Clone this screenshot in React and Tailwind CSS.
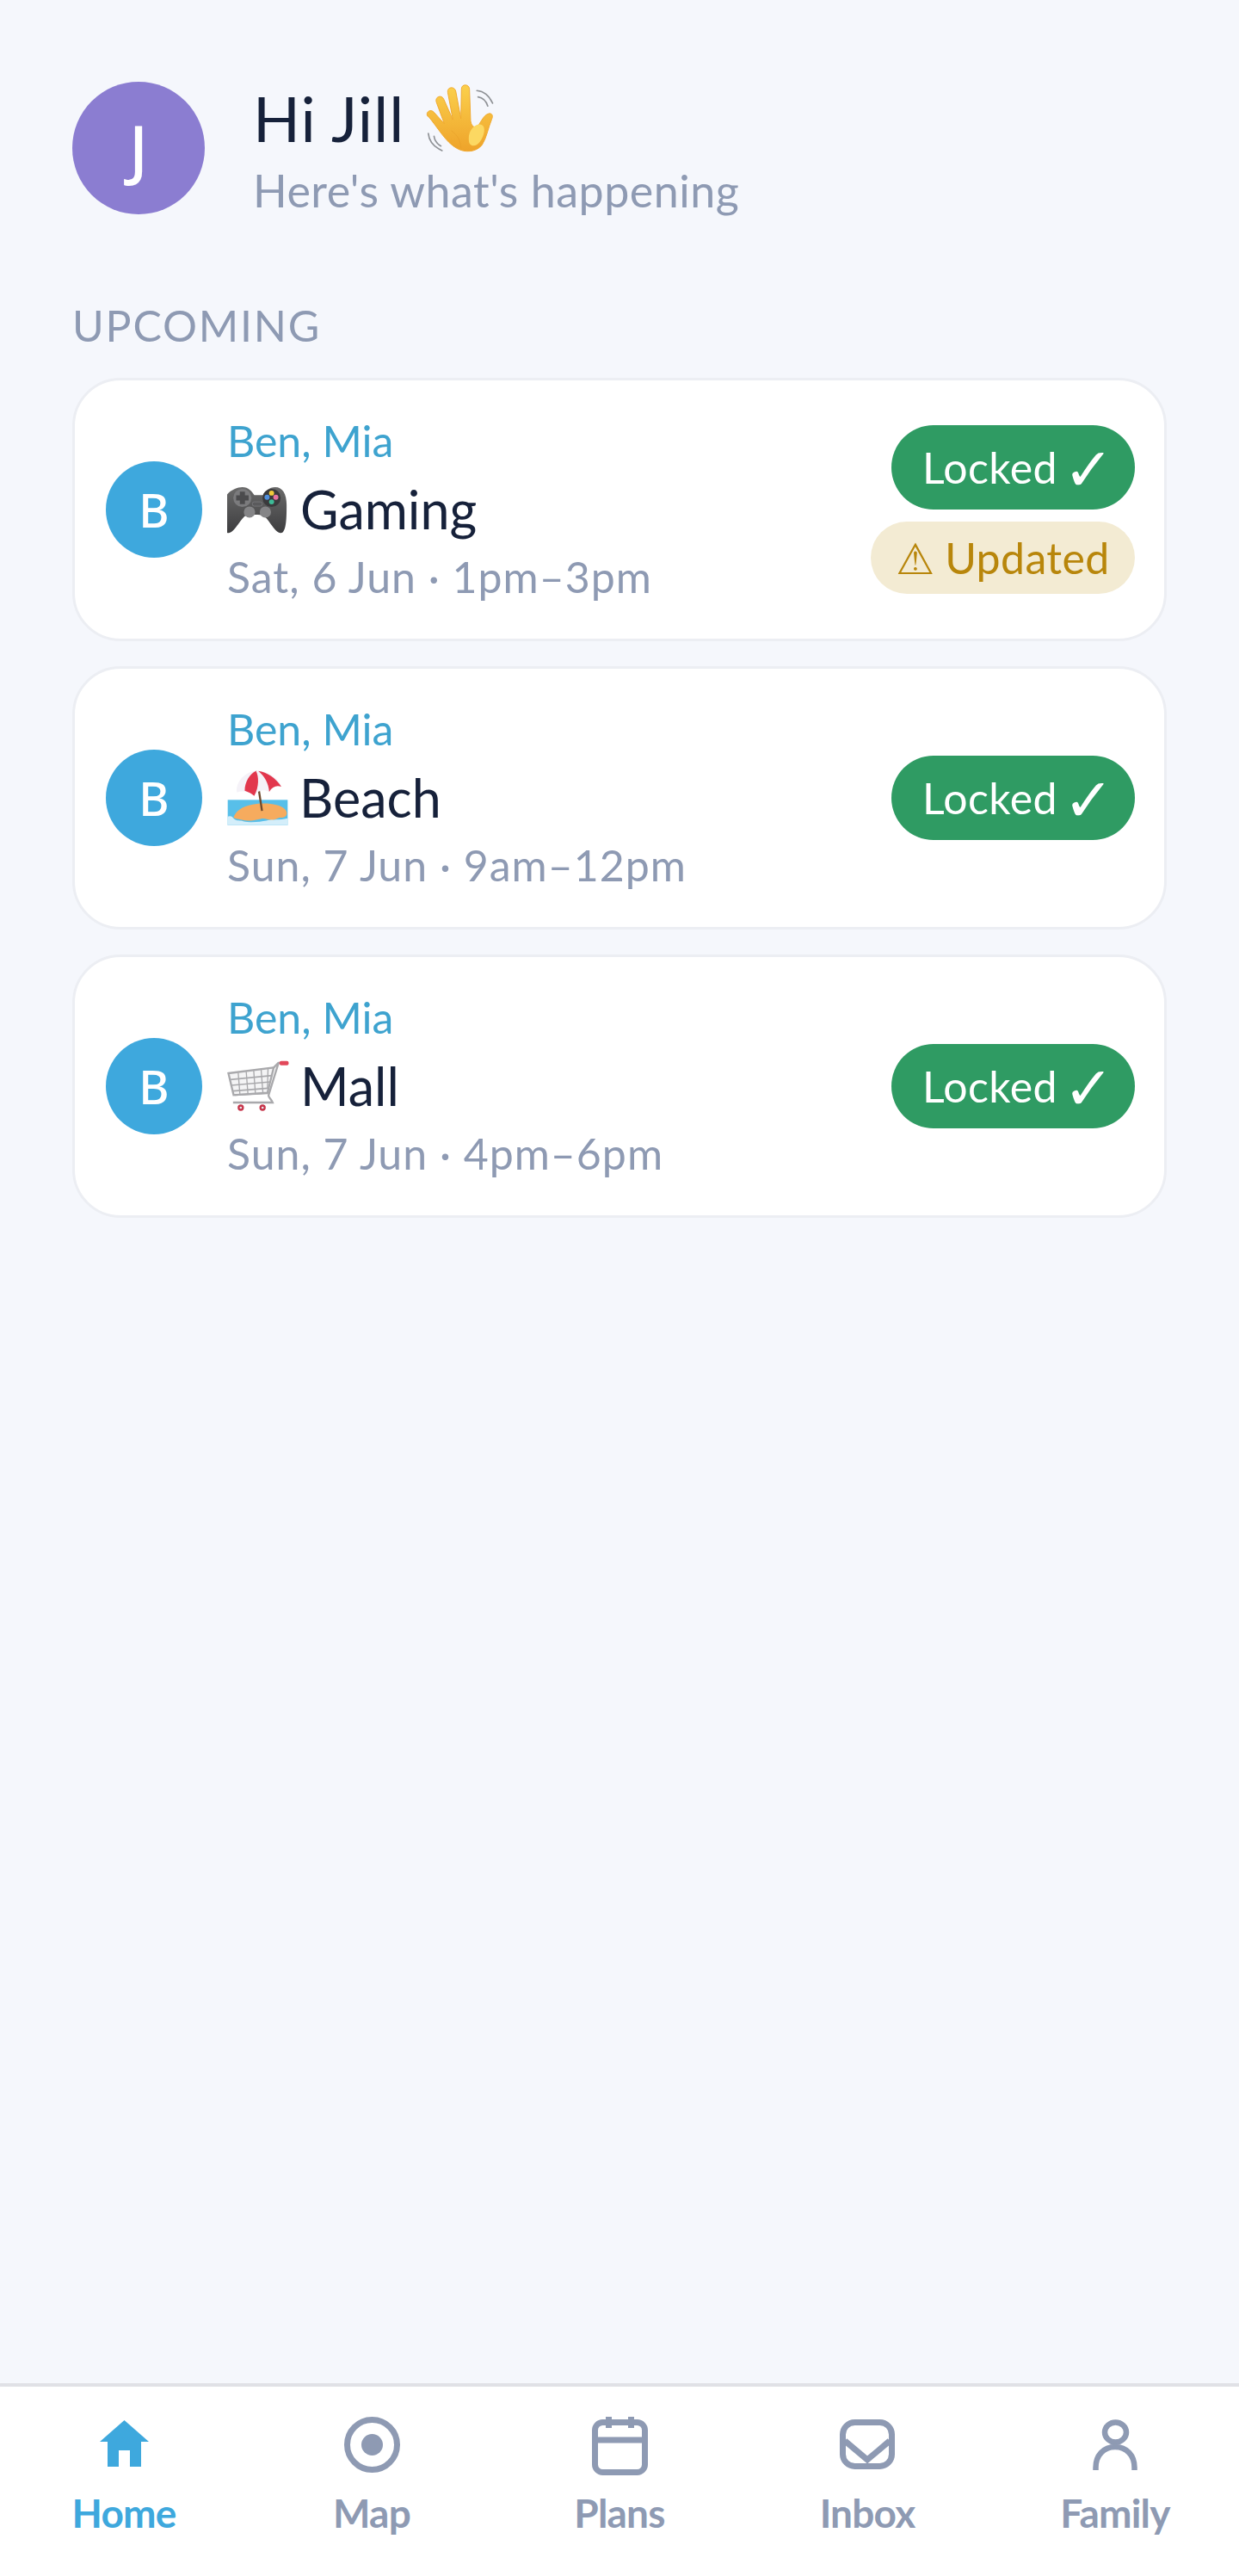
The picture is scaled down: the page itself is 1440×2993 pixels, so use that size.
import React from "react";

const Wave = () => (
  <svg width="85" height="83" viewBox="40 50 255 250" className="shrink-0">
    <defs>
      <linearGradient id="hand" x1="0" y1="0" x2="0" y2="1">
        <stop offset="0" stopColor="#fbd04c" />
        <stop offset="1" stopColor="#eea32a" />
      </linearGradient>
    </defs>
    <g fill="none" stroke="#8f9296" strokeWidth="5" strokeLinecap="round">
      <path d="M218 78c22 2 42 16 55 44" />
      <path d="M222 100c14 2 28 14 34 32" />
      <path d="M48 228c2 24 18 46 48 60" />
      <path d="M68 238c2 14 10 26 24 34" />
    </g>
    <path
      d="M46 168c-10-14 10-28 22-14l36 40-28-76c-6-18 18-28 26-10l32 72-18-96c-3-20 24-22 28-4l18 96 2-104c0-18 26-18 28 0l4 112c2 12 8 26 22 20 10-4 22-44 44-46 12 0 12 12 8 20-12 28-18 66-34 90-20 26-62 28-88 12-40-22-66-72-100-112z"
      fill="url(#hand)"
      stroke="#f0a92f"
      strokeWidth="3"
    />
    <path d="M190 236c4-26 28-46 46-38 14 8 8 38-8 60-12 16-30 16-36 4-3-6-3-16-2-26z" fill="#fcd862" />
    <path d="M128 218c20 14 34 34 34 62" fill="none" stroke="#e59a27" strokeWidth="3" opacity=".45" />
  </svg>
);

const Gamepad = () => (
  <svg width="72" height="56" viewBox="70 10 215 170" className="shrink-0">
    <defs>
      <linearGradient id="pad" x1="0" y1="0" x2="0" y2="1">
        <stop offset="0" stopColor="#6a6a6a" />
        <stop offset="1" stopColor="#3d3d3f" />
      </linearGradient>
    </defs>
    <path
      d="M122 16c22 0 32 14 42 28h30c10-14 22-28 44-28 26 0 40 24 40 62 0 40 0 98-20 100-20 2-42-48-60-60-12-6-52-6-66 0-18 12-40 62-60 60-22-2-18-60-18-100 0-38 40-62 68-62z"
      fill="url(#pad)"
    />
    <circle cx="122" cy="54" r="32" fill="#7b7b7d" />
    <path d="M113 32h18v13h13v18h-13v13h-18V63h-13V45h13z" fill="#4b4b4d" />
    <circle cx="225" cy="54" r="32" fill="#3a3a3c" />
    <circle cx="225" cy="37" r="9" fill="#f2cb3a" />
    <circle cx="240" cy="52" r="9" fill="#e873a0" />
    <circle cx="225" cy="68" r="9" fill="#3dbb97" />
    <circle cx="209" cy="52" r="9" fill="#4f8fdc" />
    <rect x="157" y="68" width="35" height="15" rx="7" fill="#5a5a5c" stroke="#848486" strokeWidth="2" />
    <circle cx="147" cy="104" r="20" fill="#858587" />
    <circle cx="203" cy="104" r="20" fill="#858587" />
  </svg>
);

const Beach = () => (
  <svg width="71" height="64" viewBox="70 18 212 190" className="shrink-0">
    <rect x="72" y="120" width="208" height="88" fill="#58bfe9" />
    <path d="M92 182c6-22 30-40 66-46 44-8 94-2 112 16 14 14 6 30-14 30-14 0-20 10-34 8-14-2-22-8-36-4-24 6-44 8-62 4-14-4-24-2-32-8z" fill="#f6ab5e" />
    <path d="M72 178c10-4 16 0 22 8 8 8 22 4 32 8 24 6 60 2 80-2 24-6 44 0 74-8v24H72z" fill="#d4eefa" />
    <path d="M170 20l21 138" stroke="#6f4a2c" strokeWidth="7" fill="none" />
    <path d="M104 94c-6-34 28-72 66-74 40-2 78 24 88 54-16-6-32 0-42 18-18-10-40-6-52 14-16-14-40-20-60-12z" fill="#f5f2f8" />
    <path d="M131 88c0-30 18-58 39-68 10 18 12 54-6 86-8-8-20-14-33-18z" fill="#e2374d" />
    <path d="M178 20c30 4 60 24 80 54-16-6-32 0-42 18-2-28-16-54-38-72z" fill="#e2374d" />
  </svg>
);

const Cart = () => (
  <svg width="72" height="60" viewBox="70 25 215 180" className="shrink-0">
    <g fill="none" stroke="#a9a9ac">
      <path d="M74 70l158-20-22 88-118 8z" strokeWidth="7" fill="#f4f4f5" />
      <path d="M80 92l146-14M84 112l136-12M90 132l122-10" strokeWidth="5" />
      <path d="M108 68l6 76M136 64l6 78M162 60l6 80M188 58l6 78M212 54l-2 70" strokeWidth="4" />
      <path d="M232 50l16-16h14" strokeWidth="7" />
      <path d="M248 36l-34 110c-2 8 8 12 14 26H90" strokeWidth="7" />
      <path d="M96 146l116-6" strokeWidth="6" />
    </g>
    <rect x="252" y="27" width="32" height="15" rx="6" fill="#e2485a" />
    <circle cx="117" cy="190" r="11" fill="#c6344a" />
    <circle cx="193" cy="190" r="11" fill="#c6344a" />
    <circle cx="117" cy="190" r="4" fill="#e7e7e9" />
    <circle cx="193" cy="190" r="4" fill="#e7e7e9" />
  </svg>
);

const HomeIcon = () => (
  <svg width="57" height="54" viewBox="0 0 57 54" className="mt-[4px]">
    <path d="M28.500 0L57 25H48V54H35V35H22V54H9V25H0z" fill="#3ea8dd" />
  </svg>
);

const MapIcon = () => (
  <svg width="65" height="65" viewBox="0 0 65 65">
    <circle cx="32.500" cy="32.500" r="29" fill="none" stroke="#8e9ab3" strokeWidth="7" />
    <circle cx="32.500" cy="32.500" r="12.500" fill="#8e9ab3" />
  </svg>
);

const PlansIcon = () => (
  <svg width="65" height="68" viewBox="0 0 65 68" fill="none" stroke="#8e9ab3" strokeWidth="7">
    <rect x="3.500" y="6.500" width="58" height="58" rx="9" />
    <path d="M3.500 27h58" />
    <path d="M19.500 0v13M45.500 0v13" />
  </svg>
);

const InboxIcon = () => (
  <svg width="64" height="58" viewBox="0 0 64 58" fill="none" stroke="#8e9ab3" strokeWidth="7" className="mt-[3px]">
    <rect x="3.500" y="3.500" width="57" height="51" rx="14" />
    <path d="M6 25l26 22 26-22" />
  </svg>
);

const FamilyIcon = () => (
  <svg width="52" height="59" viewBox="0 0 52 59" fill="none" stroke="#8e9ab3" strokeWidth="6.500" className="mt-[3px]">
    <ellipse cx="26.500" cy="15" rx="12.500" ry="11.500" />
    <path d="M3.500 59v-3c0-14 9-24 22.500-24s22.500 10 22.500 24v3" />
  </svg>
);

const Locked = () => (
  <div className="flex h-[98px] w-[283px] items-center gap-[7px] rounded-full bg-[#2f9b63] pl-[36px] text-[50px] tracking-[0.4px] text-white">
    <span>Locked</span>
    <span className="text-[70px] font-bold leading-none">✓</span>
  </div>
);

const Updated = () => (
  <div className="flex h-[84px] w-[307px] items-center justify-center gap-[12px] rounded-full bg-[#f3ebd3] text-[50px] text-[#b8860b]">
    <span>⚠</span>
    <span className="tracking-[0.4px]">Updated</span>
  </div>
);

const Card = ({ icon, title, date, updated }) => (
  <div className="flex h-[306px] items-center rounded-[56px] border-[3px] border-[#eceef3] bg-white pl-[36px] pr-[34px]">
    <div className="flex h-[112px] w-[112px] shrink-0 items-center justify-center rounded-full bg-[#3ea8dd] font-['Noto_Sans',sans-serif] text-[54px] font-medium text-white">
      B
    </div>
    <div className="ml-[29px] min-w-0 flex-1">
      <div className="h-[78px] text-[50px] leading-[75px] text-[#3ea3cf]">Ben, Mia</div>
      <div className="flex h-[78px] items-center gap-[13px] text-[61px] leading-[76px] text-[#16213a]">
        {icon}
        <span>{title}</span>
      </div>
      <div className="h-[78px] text-[50px] leading-[78px] tracking-[1px] text-[#8e9ab3]">{date}</div>
    </div>
    <div className="flex shrink-0 flex-col items-end gap-[14px]">
      <Locked />
      {updated && <Updated />}
    </div>
  </div>
);

const NavItem = ({ icon, label, active }) => (
  <div className="flex flex-col items-center pt-[35px]">
    <div className="flex h-[68px] items-start justify-center">{icon}</div>
    <div className={`mt-[14px] text-[46px] font-bold leading-[60px] tracking-[-0.8px] ${active ? "text-[#3ea8dd]" : "text-[#8e9ab3]"}`}>
      {label}
    </div>
  </div>
);

export default function App() {
  return (
    <div className="flex h-[2993px] w-[1440px] flex-col bg-[#f5f7fc] font-['Lato','DejaVu_Sans',sans-serif]">
      <main className="flex-1 px-[84px] pt-[95px]">
        <header className="flex items-start">
          <div className="flex h-[154px] w-[154px] shrink-0 items-center justify-center rounded-full bg-[#8b7dd1] font-['Noto_Sans',sans-serif] text-[76px] font-medium text-white">
            J
          </div>
          <div className="ml-[56px]">
            <div className="flex h-[84px] items-center gap-[25px] text-[72px] leading-[84px] tracking-[1px] text-[#16213a]">
              <span>Hi Jill</span>
              <Wave />
            </div>
            <div className="h-[84px] text-[52px] leading-[84px] tracking-[0.5px] text-[#8e9ab3]">Here's what's happening</div>
          </div>
        </header>
        <div className="mb-[31px] mt-[85px] text-[50px] leading-[60px] tracking-[1.800px] text-[#8e9ab3]">UPCOMING</div>
        <div className="flex flex-col gap-[29px]">
          <Card icon={<Gamepad />} title="Gaming" date="Sat, 6 Jun · 1pm–3pm" updated />
          <Card icon={<Beach />} title="Beach" date="Sun, 7 Jun · 9am–12pm" />
          <Card icon={<Cart />} title="Mall" date="Sun, 7 Jun · 4pm–6pm" />
        </div>
      </main>
      <nav className="grid h-[224px] grid-cols-5 border-t-4 border-[#e0e1e6] bg-white">
        <NavItem icon={<HomeIcon />} label="Home" active />
        <NavItem icon={<MapIcon />} label="Map" />
        <NavItem icon={<PlansIcon />} label="Plans" />
        <NavItem icon={<InboxIcon />} label="Inbox" />
        <NavItem icon={<FamilyIcon />} label="Family" />
      </nav>
    </div>
  );
}
